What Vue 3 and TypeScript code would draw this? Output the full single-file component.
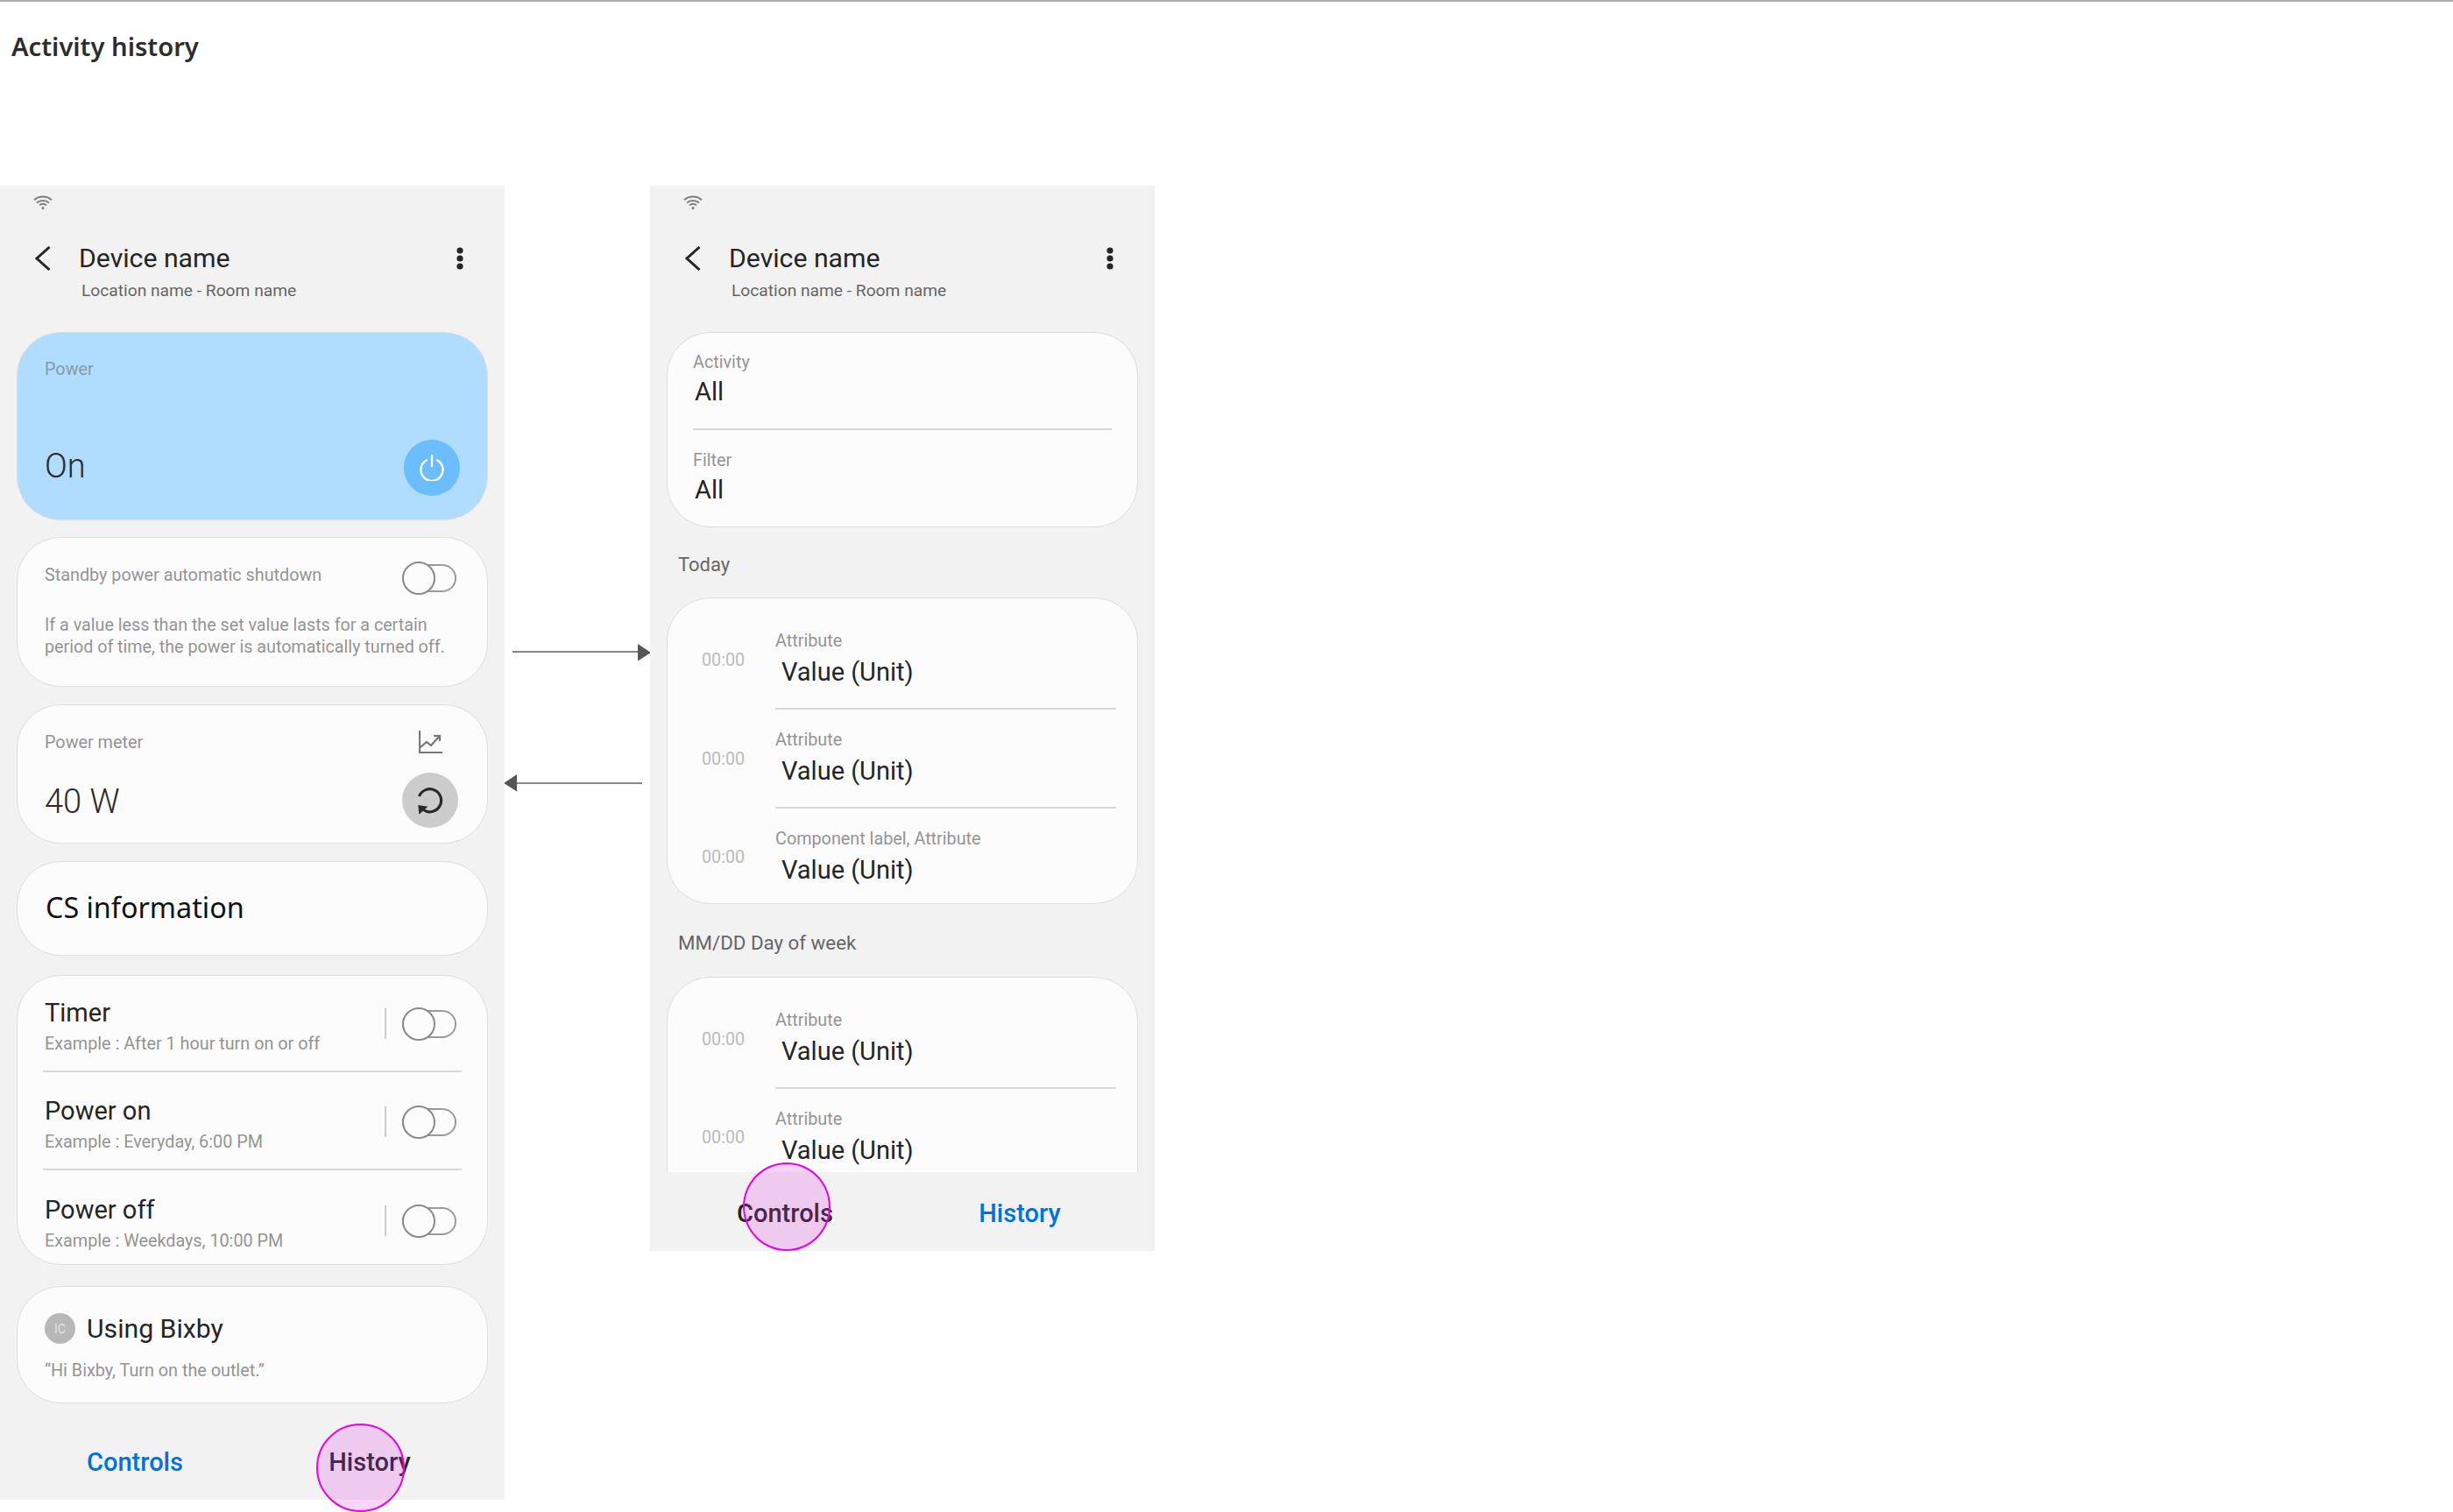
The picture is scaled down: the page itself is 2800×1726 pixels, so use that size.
<script setup lang="ts">
interface Schedule { title: string; sub: string }
interface LogRow { attr: string }

const schedules: Schedule[] = [
  { title: 'Timer', sub: 'Example : After 1 hour turn on or off' },
  { title: 'Power on', sub: 'Example : Everyday, 6:00 PM' },
  { title: 'Power off', sub: 'Example : Weekdays, 10:00 PM' },
]
const filters = [{ label: 'Activity' }, { label: 'Filter' }]
const today: LogRow[] = [{ attr: 'Attribute' }, { attr: 'Attribute' }, { attr: 'Component label, Attribute' }]
const earlier: LogRow[] = [{ attr: 'Attribute' }, { attr: 'Attribute' }]
</script>

<template>
  <div class="page">
    <header class="head"><h1 class="page-title">Activity history</h1></header>
    <div class="board">
      <!-- Controls screen -->
      <section class="phone">
        <div class="status">
          <svg class="wifi" width="22" height="16" viewBox="0 0 22 16" fill="none" stroke="#7c7c7c" stroke-width="2">
            <path d="M1 5.2C6.6.4 15.4.4 21 5.2" /><path d="M4 8.4c4-3.300 10-3.300 14 0" /><path d="M7 11.300c2.400-1.900 5.600-1.900 8 0" />
            <circle cx="11" cy="14.500" r="1.500" fill="#7c7c7c" stroke="none" />
          </svg>
        </div>
        <div class="appbar">
          <svg class="back" width="18" height="28" viewBox="0 0 18 28" fill="none" stroke="#252525" stroke-width="3"><path d="M16.500 1 2 14l14.500 13" /></svg>
          <span class="device">Device name</span>
          <svg class="more" width="8" height="26" viewBox="0 0 8 26" fill="#252525"><circle cx="4" cy="4" r="3.600" /><circle cx="4" cy="13" r="3.600" /><circle cx="4" cy="22" r="3.600" /></svg>
        </div>
        <p class="location">Location name - Room name</p>
        <div class="stack">
          <div class="card power">
            <div class="label">Power</div>
            <div class="power-row">
              <span class="big">On</span>
              <span class="power-btn">
                <svg width="30" height="30" viewBox="0 0 30 30" fill="none" stroke="#fff" stroke-width="2.400"><path d="M9 6.200a12.600 12.600 0 1 0 12 0" stroke-linecap="round" /><path d="M15 1v12" stroke-linecap="round" /></svg>
              </span>
            </div>
          </div>
          <div class="card standby">
            <div class="standby-row">
              <span class="label">Standby power automatic shutdown</span>
              <span class="toggle"><i class="track"></i><i class="knob"></i></span>
            </div>
            <p class="desc">If a value less than the set value lasts for a certain period of time, the power is automatically turned off.</p>
          </div>
          <div class="card meter">
            <div class="meter-row">
              <span class="label">Power meter</span>
              <span class="meter-icon">
                <svg width="27" height="26" viewBox="0 0 27 26" fill="none" stroke="#777" stroke-width="2.200"><path d="M1 0v25h26" /><path d="M2 19l7-6 5 4 9-10" /><path d="M17 6h7v6" /></svg>
              </span>
            </div>
            <div class="meter-value">
              <span class="big">40 W</span>
              <span class="refresh">
                <svg width="32" height="32" viewBox="0 0 32 32" fill="none" stroke="#2a2a2a" stroke-width="3.200"><path d="M3.500 11A13 13 0 1 1 8 26.300" /><path d="M2.300 21 13.300 22.700 3.300 31.700Z" fill="#2a2a2a" stroke="none" /></svg>
              </span>
            </div>
          </div>
          <div class="card cs"><span class="cs-text">CS information</span></div>
          <div class="card sched">
            <div v-for="s in schedules" :key="s.title" class="sched-row">
              <div class="sched-text">
                <div class="sched-title">{{ s.title }}</div>
                <div class="sched-sub">{{ s.sub }}</div>
              </div>
              <div class="sched-ctrl">
                <i class="vsep"></i>
                <span class="toggle"><i class="track"></i><i class="knob"></i></span>
              </div>
            </div>
          </div>
          <div class="card bixby">
            <div class="bixby-head">
              <span class="ic">IC</span>
              <span class="bixby-title">Using Bixby</span>
            </div>
            <div class="quote">“Hi Bixby, Turn on the outlet.”</div>
          </div>
        </div>
        <nav class="tabs">
          <span class="tab on">Controls</span>
          <span class="tab">History</span>
        </nav>
        <span class="touch touch-left"></span>
      </section>

      <!-- Connectors -->
      <div class="links">
        <svg class="arrow-next" width="158" height="20" viewBox="0 0 158 20">
          <path d="M0 9h144" stroke="#888" stroke-width="2" /><path d="M143 0l15 10-15 9.500z" fill="#555" />
        </svg>
        <svg class="arrow-prev" width="158" height="20" viewBox="0 0 158 20">
          <path d="M14 10h144" stroke="#888" stroke-width="2" /><path d="M15 0 0 10l15 9.500z" fill="#555" />
        </svg>
      </div>

      <!-- History screen -->
      <section class="phone phone-short">
        <div class="status">
          <svg class="wifi" width="22" height="16" viewBox="0 0 22 16" fill="none" stroke="#7c7c7c" stroke-width="2">
            <path d="M1 5.200C6.600.4 15.400.4 21 5.200" /><path d="M4 8.400c4-3.300 10-3.300 14 0" /><path d="M7 11.300c2.400-1.900 5.600-1.900 8 0" />
            <circle cx="11" cy="14.500" r="1.500" fill="#7c7c7c" stroke="none" />
          </svg>
        </div>
        <div class="appbar">
          <svg class="back" width="18" height="28" viewBox="0 0 18 28" fill="none" stroke="#252525" stroke-width="3"><path d="M16.500 1 2 14l14.500 13" /></svg>
          <span class="device">Device name</span>
          <svg class="more" width="8" height="26" viewBox="0 0 8 26" fill="#252525"><circle cx="4" cy="4" r="3.600" /><circle cx="4" cy="13" r="3.600" /><circle cx="4" cy="22" r="3.600" /></svg>
        </div>
        <p class="location">Location name - Room name</p>
        <div class="scroll">
          <div class="card filters">
            <div v-for="f in filters" :key="f.label" class="filter-row">
              <div class="label">{{ f.label }}</div>
              <div class="value">All</div>
            </div>
          </div>
          <div class="section-title">Today</div>
          <div class="card log">
            <div v-for="(r, i) in today" :key="i" class="log-row">
              <span class="time">00:00</span>
              <div class="log-body">
                <div class="label">{{ r.attr }}</div>
                <div class="value indent">Value (Unit)</div>
              </div>
            </div>
          </div>
          <div class="section-title second">MM/DD Day of week</div>
          <div class="card log">
            <div v-for="(r, i) in earlier" :key="i" class="log-row">
              <span class="time">00:00</span>
              <div class="log-body">
                <div class="label">{{ r.attr }}</div>
                <div class="value indent">Value (Unit)</div>
              </div>
            </div>
          </div>
        </div>
        <nav class="tabs">
          <span class="tab">Controls</span>
          <span class="tab on">History</span>
        </nav>
        <span class="touch touch-right"></span>
      </section>
    </div>
  </div>
</template>

<style>
html, body { margin: 0; background: #fff; }
</style>

<style scoped>
.page {
  width: 2800px;
  height: 1726px;
  overflow: hidden;
  box-sizing: border-box;
  background: #fff;
  border-top: 2px solid #aaa;
  font-family: Roboto, "Liberation Sans", sans-serif;
  color: #252525;
}
.head { height: 210px; box-sizing: border-box; padding: 32px 0 0 13px; }
.page-title { margin: 0; font: 600 29.200px/38px "Noto Sans", sans-serif; color: #2d2d2d; }
.board { display: flex; align-items: flex-start; }
.phone { position: relative; width: 576px; height: 1500px; display: flex; flex-direction: column; background: #f2f2f2; flex: none; }
.phone-short { height: 1216px; }
.status { height: 57px; padding: 11px 0 0 38px; box-sizing: border-box; }
.wifi { display: block; }
.appbar { height: 52px; display: flex; align-items: center; padding: 0 47px 0 40px; }
.back { flex: none; }
.device { font-size: 30.200px; line-height: 40px; margin-left: 32px; flex: 1; color: #252525; }
.more { flex: none; }
.location { margin: 0 0 36px; padding-left: 93px; font-size: 19.200px; line-height: 22px; color: #666; }
.stack { padding: 0 19px; }
.scroll { padding: 0 19px; flex: 1; min-height: 0; overflow: hidden; }
.card { box-sizing: border-box; background: #fcfcfc; border: 1px solid #dedede; border-radius: 50px; }
.label { font-size: 19.800px; line-height: 24px; padding-top: 1px; margin-bottom: -1px; color: #949494; }
.big { font-size: 38px; line-height: 46px; font-weight: 300; color: #2a2a2a; }
.power { height: 215px; padding: 29px 31px 0; background: #b0dcfd; }
.power .label { color: #8a9aa6; }
.power-row { display: flex; justify-content: space-between; align-items: center; margin-top: 69px; }
.power-row .big { margin-top: -4px; }
.power-btn { width: 64px; height: 64px; border-radius: 50%; background: #6cbdfd; display: flex; align-items: center; justify-content: center; }
.standby { height: 171px; margin-top: 19px; padding: 30px 35px 0 31px; }
.standby-row { display: flex; justify-content: space-between; align-items: flex-start; height: 35px; }
.toggle { position: relative; display: block; width: 62px; height: 38px; flex: none; }
.standby-row .toggle { margin-top: -3px; }
.track { position: absolute; left: 0; right: 0; top: 3px; bottom: 3px; box-sizing: border-box; border: 2px solid #9a9a9a; border-radius: 16px; }
.knob { position: absolute; left: 0; top: 0; width: 38px; height: 38px; box-sizing: border-box; border: 2px solid #8a8a8a; border-radius: 50%; background: #fcfcfc; }
.desc { margin: 22px 0 0; width: 470px; font-size: 19.700px; line-height: 25px; color: #949494; }
.meter { height: 159px; margin-top: 20px; padding: 29px 33px 0 31px; }
.meter-row { display: flex; justify-content: space-between; align-items: center; height: 26px; }
.meter-icon { width: 64px; display: flex; justify-content: center; }
.meter-value { display: flex; justify-content: space-between; align-items: center; margin-top: 22px; }
.meter-value .big { margin-top: 2px; }
.refresh { width: 64px; height: 63px; border-radius: 50%; background: #ccc; display: flex; align-items: center; justify-content: center; }
.cs { height: 108px; margin-top: 20px; padding: 0 0 5px 32px; display: flex; align-items: center; }
.cs-text { font: 400 32.300px/44px "Noto Sans", sans-serif; color: #111; }
.sched { height: 331px; margin-top: 22px; padding: 0 29px; }
.sched-row { display: flex; justify-content: space-between; align-items: center; height: 112px; box-sizing: border-box; padding: 27px 6px 20px 2px; border-bottom: 2px solid #d8d8d8; }
.sched-row:first-child { height: 110px; padding-top: 25px; }
.sched-row:last-child { border-bottom: 0; }
.sched-title { font-size: 29px; line-height: 36px; color: #252525; }
.sched-sub { font-size: 19.800px; line-height: 24px; margin-top: 6px; margin-bottom: -1px; color: #949494; }
.sched-ctrl { display: flex; align-items: center; gap: 18px; margin-top: -4px; }
.vsep { width: 2px; height: 35px; background: #ccc; }
.bixby { height: 134px; margin-top: 24px; padding: 30px 0 0 31px; }
.bixby-head { display: flex; align-items: center; gap: 13px; height: 35px; }
.ic { width: 35px; height: 35px; border-radius: 50%; background: #b8b8b8; color: #e4e4e4; font-size: 14px; display: flex; align-items: center; justify-content: center; }
.bixby-title { font-size: 30.200px; line-height: 35px; color: #252525; }
.quote { margin-top: 19px; font-size: 19.800px; line-height: 24px; color: #949494; }
.tabs { margin-top: auto; display: grid; grid-template-columns: 268px 268px; padding: 0 20px 26px; background: #f2f2f2; position: relative; }
.phone-short .tabs { height: 90px; box-sizing: border-box; align-items: end; flex: none; }
.tab { text-align: center; font-size: 29px; line-height: 34px; font-weight: 500; color: #252525; }
.tab.on { color: #0072de; }
.touch { position: absolute; box-sizing: border-box; width: 101px; height: 101px; border-radius: 50%; border: 2px solid #e800e8; background: rgba(225, 50, 225, .2); z-index: 2; }
.touch-left { left: 361px; top: 1413px; }
.touch-right { left: 106px; top: 1115px; width: 100px; }
.links { width: 166px; flex: none; }
.arrow-next { display: block; margin: 523px 0 0 9px; }
.arrow-prev { display: block; margin: 129px 0 0 -1px; }
.filters { height: 223px; padding: 0 29px; }
.filter-row { box-sizing: border-box; padding: 21px 0 24px; border-bottom: 2px solid #d8d8d8; }
.filter-row:last-child { border-bottom: 0; padding-top: 22px; }
.value { margin-top: 4px; font-size: 29px; line-height: 36px; padding-left: 2px; color: #252525; }
.value.indent { margin-top: 6px; padding-left: 7px; }
.section-title { margin: 29px 0 23px 13px; font-size: 22px; line-height: 28px; color: #666; }
.section-title.second { margin-top: 30px; margin-bottom: 25px; font-size: 22.300px; }
.log { height: 350px; padding: 14px 24px 0 39px; }
.log:last-child { height: 480px; }
.log-row { display: flex; align-items: center; }
.time { width: 84px; flex: none; font-size: 19.700px; color: #bbb; }
.log-body { flex: 1; padding: 22px 0 23px; border-bottom: 2px solid #d8d8d8; }
.log-row:last-child .log-body { border-bottom: 0; }
</style>
